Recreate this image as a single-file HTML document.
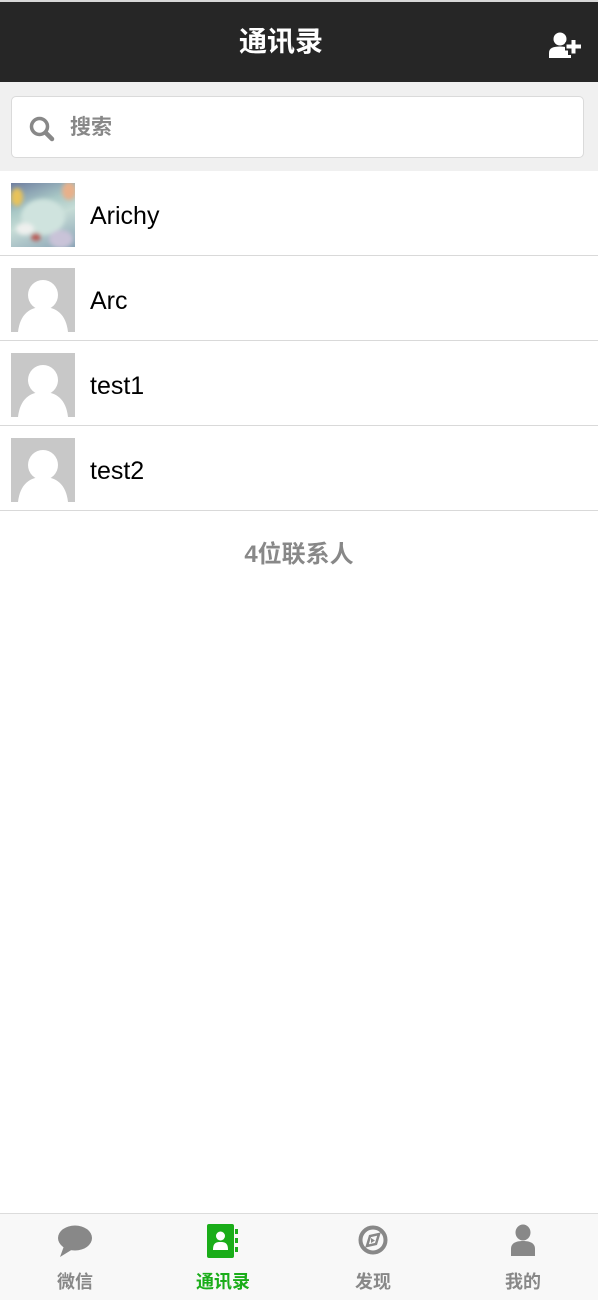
<!DOCTYPE html>
<html><head><meta charset="utf-8"><style>
*{margin:0;padding:0;box-sizing:border-box}
body{width:598px;height:1300px;background:#fff;font-family:"Liberation Sans","Noto Sans CJK SC",sans-serif;position:relative;overflow:hidden}
.top{position:absolute;top:0;left:0;width:598px;height:2px;background:#d8d8d8}
.hd{position:absolute;top:2px;left:0;width:598px;height:80px;background:#262626;color:#fff;text-align:center;line-height:80px;font-size:28px;font-weight:bold}
.hd .ti{position:absolute;left:0;width:562px;top:0;text-align:center}
.hd svg{position:absolute;left:548px;top:29px}
.sa{position:absolute;top:82px;left:0;width:598px;height:89px;background:#f0f0f0}
.sb{position:absolute;left:11px;top:14px;width:573px;height:62px;background:#fff;border:1px solid #dadada;border-radius:5px}
.sb svg{position:absolute;left:17px;top:19px}
.sb span{position:absolute;left:58px;top:1px;line-height:60px;font-size:21px;color:#888;font-weight:bold}
.row{position:absolute;left:0;width:598px;height:85px;border-bottom:1px solid #d9d9d9}
.av{position:absolute;left:11px;top:12px;width:64px;height:64px;background:#c8c8c8;overflow:hidden}
.nm{position:absolute;left:90px;top:2px;line-height:86px;font-size:25px;color:#000}
.cnt{position:absolute;top:534px;width:598px;text-align:center;font-size:24px;color:#888;font-weight:bold}
.tb{position:absolute;top:1213px;left:0;width:598px;height:87px;background:#f8f8f8;border-top:1px solid #dcdcdc}
.t{position:absolute;top:0;width:150px;text-align:center;color:#888;font-size:18px;font-weight:bold}
.t svg{position:absolute;left:50%;top:10px;transform:translateX(-50%)}
.t span{position:absolute;top:54px;left:0;width:100%}
</style></head><body>
<div class="top"></div>
<div class="hd"><div class="ti">通讯录</div>
<svg width="36" height="28" viewBox="0 0 36 28"><circle cx="12" cy="8" r="6.5" fill="#fff"/><path d="M1 27 L1 22 C1 17 5 15.5 12 15.5 C19 15.5 23 17 23 22 L23 27Z" fill="#fff"/><path d="M24 7 V24 M17 15.5 H33" stroke="#262626" stroke-width="8"/><path d="M25.5 9 V22.5 M18.5 15.5 H33" stroke="#fff" stroke-width="4"/></svg></div>
<div class="sa"><div class="sb"><svg width="26" height="26" viewBox="0 0 26 26"><circle cx="10.5" cy="10.5" r="8" fill="none" stroke="#888" stroke-width="3.5"/><path d="M16.5 16.5 L23 23" stroke="#888" stroke-width="4.5" stroke-linecap="round"/></svg><span>搜索</span></div></div>

<div class="row" style="top:171px"><div class="av" style="background:linear-gradient(160deg,#6f7fa0 0%,#a9c8c6 35%,#c6dcd6 55%,#8aa4b6 100%)">
<svg width="64" height="64"><defs><filter id="b"><feGaussianBlur stdDeviation="2"/></filter></defs><g filter="url(#b)"><ellipse cx="6" cy="14" rx="6" ry="9" fill="#e8c35a"/><ellipse cx="58" cy="8" rx="7" ry="9" fill="#e8b08a"/><ellipse cx="32" cy="34" rx="22" ry="18" fill="#cfe3de"/><ellipse cx="14" cy="46" rx="9" ry="6" fill="#eef0ee"/><ellipse cx="25" cy="54" rx="5" ry="4" fill="#b85a55"/><ellipse cx="50" cy="56" rx="12" ry="9" fill="#c9c3d8"/></g></svg></div><div class="nm">Arichy</div></div>

<div class="row" style="top:256px"><div class="av"><svg width="64" height="64"><circle cx="32" cy="27" r="15" fill="#fff"/><path d="M7 64 C9 46 19 39 32 39 C45 39 55 46 57 64Z" fill="#fff"/></svg></div><div class="nm">Arc</div></div>
<div class="row" style="top:341px"><div class="av"><svg width="64" height="64"><circle cx="32" cy="27" r="15" fill="#fff"/><path d="M7 64 C9 46 19 39 32 39 C45 39 55 46 57 64Z" fill="#fff"/></svg></div><div class="nm">test1</div></div>
<div class="row" style="top:426px"><div class="av"><svg width="64" height="64"><circle cx="32" cy="27" r="15" fill="#fff"/><path d="M7 64 C9 46 19 39 32 39 C45 39 55 46 57 64Z" fill="#fff"/></svg></div><div class="nm">test2</div></div>

<div class="cnt">4位联系人</div>

<div class="tb">
<div class="t" style="left:0"><svg width="36" height="34" viewBox="0 0 36 34"><ellipse cx="18" cy="14" rx="17" ry="12.5" fill="#888"/><path d="M7 22 L3 33 L16 25Z" fill="#888"/></svg><span>微信</span></div>
<div class="t" style="left:148px;color:#1aad19"><svg width="34" height="34" viewBox="0 0 34 34"><rect x="1" y="0" width="27" height="34" rx="2" fill="#1aad19"/><rect x="29" y="5" width="3" height="5" fill="#1aad19"/><rect x="29" y="14" width="3" height="5" fill="#1aad19"/><rect x="29" y="23" width="3" height="5" fill="#1aad19"/><circle cx="14.5" cy="12" r="4.5" fill="#fff"/><path d="M7 26 C7 19 10 18 14.5 18 C19 18 22 19 22 26Z" fill="#fff"/></svg><span>通讯录</span></div>
<div class="t" style="left:298px"><svg width="32" height="32" viewBox="0 0 32 32"><circle cx="16" cy="16" r="12.5" fill="none" stroke="#888" stroke-width="4"/><path d="M22 10 L19 20 L10 22 L13 12Z" fill="none" stroke="#888" stroke-width="2.5"/><path d="M14 14 L18 16.5 L14 19Z" fill="#888"/></svg><span>发现</span></div>
<div class="t" style="left:448px"><svg width="26" height="32" viewBox="0 0 26 32"><ellipse cx="13" cy="8.5" rx="7.5" ry="8" fill="#888"/><path d="M1 32 L1 25 C1 19 6 17 13 17 C20 17 25 19 25 25 L25 32Z" fill="#888"/></svg><span>我的</span></div>
</div>
</body></html>
